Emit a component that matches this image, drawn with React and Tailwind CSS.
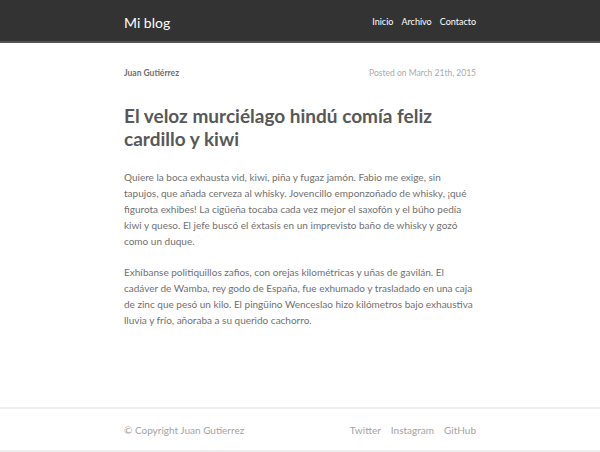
const font = { fontFamily: 'Lato, "Open Sans", sans-serif' }

const Header = () => (
    <header className="h-[43px] bg-[#333333] border-b-2 border-[#555555]">
        <div className="w-[352px] mx-auto h-full flex items-center justify-between pt-[3px]">
            <a className="text-white text-[14px]">Mi blog</a>
            <nav className="flex gap-[8px] text-[9px] text-white pl-[2px]">
                <a>Inicio</a>
                <a>Archivo</a>
                <a>Contacto</a>
            </nav>
        </div>
    </header>
)

const Footer = () => (
    <footer className="border-t-2 border-b-2 border-[#eeeeee] h-[45px]">
        <div className="w-[352px] mx-auto h-full flex items-center justify-between text-[10px] text-[#a3a3a3] pt-[1px]">
            <span>© Copyright Juan Gutierrez</span>
            <div className="flex gap-[10px]">
                <a>Twitter</a>
                <a>Instagram</a>
                <a>GitHub</a>
            </div>
        </div>
    </footer>
)

export default function App() {
    return (
        <div className="w-[600px] h-[452px] bg-white flex flex-col" style={font}>
            <Header />
            <main className="flex-1 w-[352px] mx-auto pt-[24px]">
                <div className="flex justify-between items-center text-[8.5px]">
                    <span className="text-[#6f6f6f] font-bold">Juan Gutiérrez</span>
                    <span className="text-[#aaaaaa]">Posted on March 21th, 2015</span>
                </div>
                <h1 className="mt-[24px] text-[19px] leading-[23px] font-bold text-[#585858]">
                    El veloz murciélago hindú comía feliz cardillo y kiwi
                </h1>
                <div className="mt-[19px] w-[370px] text-[10px] leading-[16px] text-[#707070] flex flex-col gap-[15px]">
                    <p>
                        Quiere la boca exhausta vid, kiwi, piña y fugaz jamón. Fabio me exige, sin<br />
                        tapujos, que añada cerveza al whisky. Jovencillo emponzoñado de whisky, ¡qué<br />
                        figurota exhibes! La cigüeña tocaba cada vez mejor el saxofón y el búho pedía<br />
                        kiwi y queso. El jefe buscó el éxtasis en un imprevisto baño de whisky y gozó<br />
                        como un duque.
                    </p>
                    <p>
                        Exhíbanse politiquillos zafios, con orejas kilométricas y uñas de gavilán. El<br />
                        cadáver de Wamba, rey godo de España, fue exhumado y trasladado en una caja<br />
                        de zinc que pesó un kilo. El pingüino Wenceslao hizo kilómetros bajo exhaustiva<br />
                        lluvia y frío, añoraba a su querido cachorro.
                    </p>
                </div>
            </main>
            <Footer />
        </div>
    )
}
